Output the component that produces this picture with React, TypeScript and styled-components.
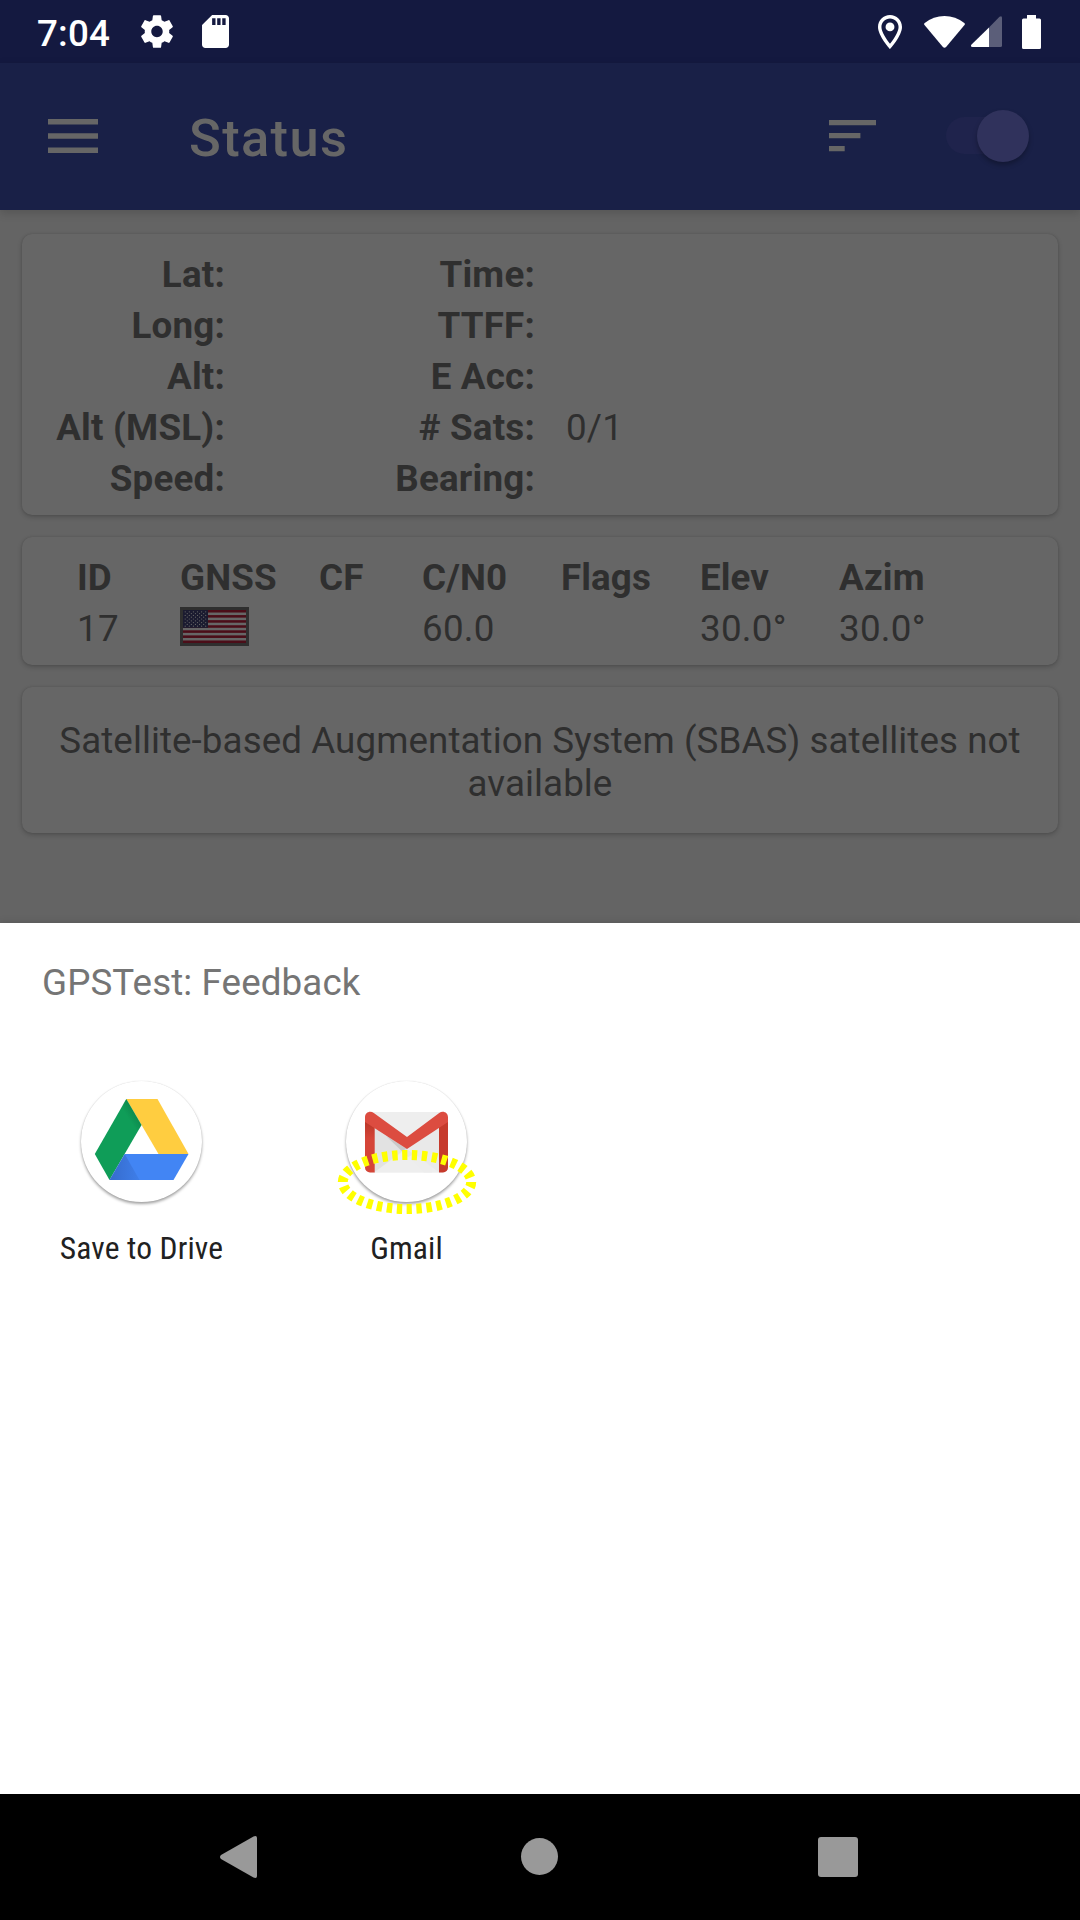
import React from "react";
import styled, { createGlobalStyle } from "styled-components";

const Global = createGlobalStyle`
  html, body { margin: 0; padding: 0; background: #000; }
  * { box-sizing: border-box; }
`;

const Screen = styled.div`
  width: 1080px;
  height: 1920px;
  display: flex;
  flex-direction: column;
  overflow: hidden;
  font-family: Roboto, "Noto Sans", sans-serif;
  font-size: 36.75px;
  line-height: 43px;
`;

const StatusBar = styled.header`
  height: 63px;
  flex: none;
  display: flex;
  align-items: center;
  justify-content: space-between;
  padding: 0 39px 0 37px;
  background: #141940;
  color: #fff;
`;

const Cluster = styled.div`
  display: flex;
  align-items: center;
`;

const Clock = styled.span`
  width: 103.5px;
  font-weight: 500;
  letter-spacing: 0.2px;
  padding-top: 3px;
`;

const Glyph = styled.svg<{ $gap?: number }>`
  display: block;
  flex: none;
  overflow: visible;
  margin-left: ${(p) => p.$gap ?? 0}px;
`;

const AppBar = styled.div`
  position: relative;
  z-index: 1;
  height: 147px;
  flex: none;
  display: flex;
  align-items: center;
  padding: 0 60px 2px 48px;
  background: #192047;
  box-shadow: 0 3px 9px rgba(0, 0, 0, 0.16);
`;

const Title = styled.h1`
  flex: 1;
  margin: 5px 0 0 91px;
  font-size: 52.5px;
  line-height: 62px;
  font-weight: 500;
  letter-spacing: 1.35px;
  color: #666;
`;

const Track = styled.div`
  width: 74px;
  height: 37px;
  margin-left: 70px;
  display: flex;
  align-items: center;
  justify-content: flex-end;
  border-radius: 19px;
  background: #1f234c;
`;

const Thumb = styled.div`
  flex: none;
  width: 52px;
  height: 52px;
  margin-right: -9px;
  border-radius: 50%;
  background: #30325c;
  box-shadow: 0 3px 5px rgba(0, 0, 0, 0.28);
`;

const Content = styled.main`
  height: 713px;
  flex: none;
  display: flex;
  flex-direction: column;
  gap: 22px;
  padding: 24px 22px 0;
  background: #646464;
  color: #2f2f2f;
`;

const Card = styled.section<{ $height: number; $pad: string }>`
  flex: none;
  height: ${(p) => p.$height}px;
  padding: ${(p) => p.$pad};
  border-radius: 10px;
  background: #666;
  box-shadow: 0 2px 5px rgba(0, 0, 0, 0.2), 0 0 2px rgba(0, 0, 0, 0.12);
`;

const Facts = styled.div`
  display: grid;
  grid-template-columns: 203px 310px 1fr;
  grid-auto-rows: 51px;
`;

const FactLabel = styled.span`
  font-weight: 700;
  letter-spacing: 0.2px;
  text-align: right;
  white-space: nowrap;
`;

const FactValue = styled.span`
  padding-left: 31px;
  letter-spacing: 0.2px;
`;

const SatTable = styled.div`
  display: grid;
  grid-template-columns: 103px 139px 103px 139px 139px 139px 1fr;
  grid-auto-rows: 51px;
`;

const Cell = styled.span<{ $head?: boolean }>`
  font-weight: ${(p) => (p.$head ? 700 : 400)};
  letter-spacing: ${(p) => (p.$head ? 0.1 : 0.25)}px;
  white-space: nowrap;
`;

const Notice = styled.p`
  margin: 0;
  text-align: center;
  letter-spacing: 0.08px;
`;

const Sheet = styled.section`
  height: 871px;
  flex: none;
  padding: 38px 0 0;
  background: #fff;
  box-shadow: 0 0 8px rgba(0, 0, 0, 0.15);
`;

const SheetTitle = styled.h2`
  margin: 0 0 76px 42px;
  font-size: 36.75px;
  font-weight: 400;
  letter-spacing: 0.1px;
  color: #757575;
`;

const Targets = styled.div`
  display: flex;
  padding-left: 9px;
`;

const Target = styled.div`
  position: relative;
  width: 265px;
  display: flex;
  flex-direction: column;
  align-items: center;
`;

const Disc = styled.div`
  width: 121px;
  height: 121px;
  margin-top: 1px;
  display: flex;
  align-items: center;
  justify-content: center;
  border-radius: 50%;
  background: #fff;
  box-shadow: 0 2px 3px rgba(0, 0, 0, 0.36), 0 0 1px rgba(0, 0, 0, 0.16);
`;

const Logo = styled.svg`
  flex: none;
`;

const TargetLabel = styled.span`
  margin-top: 28px;
  font-family: "Roboto Condensed", Roboto, sans-serif;
  font-stretch: 75%;
  font-size: 31.5px;
  line-height: 37px;
  letter-spacing: 0.15px;
  color: #212121;
  white-space: nowrap;
`;

const Highlight = styled.svg`
  position: absolute;
  left: 60px;
  top: 66px;
`;

const NavBar = styled.nav`
  height: 126px;
  flex: none;
  display: flex;
  align-items: center;
  padding: 0 0 1px 220px;
  background: #000;
`;

const Flag = () => (
  <Glyph width="69" height="39" viewBox="0 0 69 39">
    <rect width="69" height="39" fill="#2f2f2f" />
    <rect x="3" y="3" width="63" height="33" fill="#666" />
    {[0, 1, 2, 3, 4, 5, 6].map((i) => (
      <rect key={i} x="3" y={3 + i * 5.08} width="63" height="2.54" fill="#4b0d18" />
    ))}
    <rect x="3" y="3" width="25" height="17.8" fill="#1b1b30" />
    {[0, 1, 2, 3, 4, 5, 6, 7, 8].map((r) =>
      Array.from({ length: r % 2 ? 5 : 6 }, (_, c) => (
        <circle
          key={`${r}-${c}`}
          cx={5.2 + c * 4.1 + (r % 2 ? 2.05 : 0)}
          cy={4.8 + r * 1.8}
          r="0.6"
          fill="#666"
        />
      ))
    )}
  </Glyph>
);

const facts: [string, string, string][] = [
  ["Lat:", "Time:", ""],
  ["Long:", "TTFF:", ""],
  ["Alt:", "E Acc:", ""],
  ["Alt (MSL):", "# Sats:", "0/1"],
  ["Speed:", "Bearing:", ""],
];

const columns = ["ID", "GNSS", "CF", "C/N0", "Flags", "Elev", "Azim"];
const satellite: React.ReactNode[] = ["17", <Flag />, "", "60.0", "", "30.0°", "30.0°"];

const DriveLogo = () => (
  <Logo width="122" height="122" viewBox="0 0 122 122">
    <defs>
      <linearGradient id="gs" x1="55" y1="32" x2="47" y2="37" gradientUnits="userSpaceOnUse">
        <stop offset="0" stopColor="#0a6b3c" stopOpacity=".4" />
        <stop offset="1" stopColor="#0a6b3c" stopOpacity="0" />
      </linearGradient>
      <linearGradient id="bs" x1="30" y1="88" x2="58" y2="88" gradientUnits="userSpaceOnUse">
        <stop offset="0" stopColor="#2a54a8" stopOpacity=".5" />
        <stop offset="1" stopColor="#2a54a8" stopOpacity=".15" />
      </linearGradient>
    </defs>
    <path d="M45.3 18H76.500L107.500 73H77.500Z" fill="#ffcd40" />
    <path d="M45.3 18L60.500 44L28.500 99L13.800 73Z" fill="#0f9d58" />
    <path d="M45.3 18L60.500 44L57 50L39 28Z" fill="url(#gs)" />
    <path d="M43.700 73H107.500L92.500 99H28.500Z" fill="#4285f4" />
    <path d="M43.700 73L58.500 99H28.500Z" fill="url(#bs)" />
  </Logo>
);

const GmailLogo = () => (
  <Logo width="122" height="122" viewBox="0 0 122 122">
    <defs>
      <linearGradient id="fold" x1="40" y1="54" x2="62" y2="88" gradientUnits="userSpaceOnUse">
        <stop offset="0" stopColor="#c6c6c6" />
        <stop offset="1" stopColor="#e6e6e6" />
      </linearGradient>
      <linearGradient id="side" x1="0" y1="40" x2="0" y2="91" gradientUnits="userSpaceOnUse">
        <stop offset="0" stopColor="#b93628" />
        <stop offset=".35" stopColor="#d54538" />
      </linearGradient>
    </defs>
    <rect x="19" y="31" width="83" height="60.500" rx="5" fill="#eee" />
    <path d="M28 47V91.500L61 68Z" fill="#e2e2e2" />
    <path d="M40 54L61 68L76 78L86 86V91.500H78Z" fill="url(#fold)" opacity=".5" />
    <path d="M40 55L61 68L68 73L62 76Z" fill="#c4c4c4" opacity=".8" />
    <path d="M61 68L93 47V91.500Z" fill="#e9e9e9" />
    <path d="M28 91.500L58 69Q61 67 64 69L93 91.500Z" fill="#eee" opacity=".7" />
    <path d="M19 36V86.500A5 5 0 0 0 24 91.500H28.700V43Z" fill="url(#side)" />
    <path d="M102 36V86.500A5 5 0 0 1 97 91.500H93V43Z" fill="#c63a2c" />
    <path d="M19 36.500C19 31.500 24 29.300 27.800 32L61 56L93.200 32C97 29.300 102 31.500 102 36.500V41L61 68L19 41Z" fill="#dc4c40" />
  </Logo>
);

export default function App() {
  return (
    <>
      <Global />
      <Screen>
        <StatusBar>
          <Cluster>
            <Clock>7:04</Clock>
            <Glyph width="32" height="33" viewBox="2.200 2 19.600 20">
              <path
                fill="#fff"
                d="M19.43 12.98c.04-.32.07-.64.07-.98s-.03-.66-.07-.98l2.11-1.65c.19-.15.24-.42.12-.64l-2-3.46c-.12-.22-.39-.3-.61-.22l-2.49 1c-.52-.4-1.08-.73-1.69-.98l-.38-2.65C14.46 2.18 14.25 2 14 2h-4c-.25 0-.46.18-.49.42l-.38 2.65c-.61.25-1.17.59-1.69.98l-2.49-1c-.23-.09-.49 0-.61.22l-2 3.46c-.13.22-.07.49.12.64l2.11 1.65c-.04.32-.07.65-.07.98s.03.66.07.98l-2.11 1.65c-.19.15-.24.42-.12.64l2 3.46c.12.22.39.3.61.22l2.49-1c.52.4 1.08.73 1.69.98l.38 2.65c.03.24.24.42.49.42h4c.25 0 .46-.18.49-.42l.38-2.65c.61-.25 1.17-.59 1.69-.98l2.49 1c.23.09.49 0 .61-.22l2-3.46c.12-.22.07-.49-.12-.64l-2.11-1.65zM12 15.5c-1.93 0-3.5-1.57-3.5-3.5s1.57-3.5 3.5-3.5 3.500 1.57 3.500 3.500-1.570 3.500-3.500 3.500z"
              />
            </Glyph>
            <Glyph $gap={29} width="27" height="33" viewBox="4 2 16 20" preserveAspectRatio="none">
              <path fill="#fff" d="M18 2h-8L4.020 8 4 20c0 1.100.9 2 2 2h12c1.100 0 2-.9 2-2V4c0-1.100-.9-2-2-2zm-6 6h-2V4h2v4zm3 0h-2V4h2v4zm3 0h-2V4h2v4z" />
            </Glyph>
          </Cluster>
          <Cluster>
            <Glyph width="24" height="34" viewBox="5 2 14 20" preserveAspectRatio="none">
              <path fill="#fff" d="M12 2C8.130 2 5 5.130 5 9c0 5.250 7 13 7 13s7-7.750 7-13c0-3.870-3.130-7-7-7zM7 9c0-2.760 2.240-5 5-5s5 2.240 5 5c0 2.880-2.880 7.190-5 9.880C9.920 16.210 7 11.850 7 9z" />
              <circle cx="12" cy="9" r="2.600" fill="#fff" />
            </Glyph>
            <Glyph $gap={22} width="41" height="32" viewBox="0 0 41 32">
              <path fill="#fff" d="M.3 8.800Q-.3 7.800.7 7Q9.500 0 20.500 0T40.300 7Q41.300 7.800 40.700 8.800L22.300 30.800Q20.500 32.800 18.700 30.800Z" />
            </Glyph>
            <Glyph $gap={6} width="31" height="31" viewBox="0 0 31 31">
              <path fill="#5b5e79" d="M18 11.500L28.500.8Q31-.8 31 1.800V29.500Q31 31 29.500 31H18Z" />
              <path fill="#fff" d="M18 11.500V31H1.500Q-.8 31 .3 28.800Z" />
            </Glyph>
            <Glyph $gap={20} width="19" height="34" viewBox="0 0 19 34">
              <path fill="#fff" d="M5 0H14V3.500H17.500Q19 3.500 19 5V32.500Q19 34 17.500 34H1.500Q0 34 0 32.500V5Q0 3.500 1.500 3.500H5Z" />
            </Glyph>
          </Cluster>
        </StatusBar>

        <AppBar>
          <Glyph width="50" height="34" viewBox="0 0 50 34">
            <path fill="#666" d="M0 0H50V5.600H0ZM0 14.200H50V19.800H0ZM0 28.400H50V34H0Z" />
          </Glyph>
          <Title>Status</Title>
          <Glyph width="47" height="31" viewBox="0 0 47 31">
            <path fill="#666" d="M0 0H47V5.200H0ZM0 13H31.400V18.200H0ZM0 26H15.700V31.200H0Z" />
          </Glyph>
          <Track>
            <Thumb />
          </Track>
        </AppBar>

        <Content>
          <Card $height={281} $pad="19px 0 0 0">
            <Facts>
              {facts.map(([left, right, value]) => (
                <React.Fragment key={left}>
                  <FactLabel>{left}</FactLabel>
                  <FactLabel>{right}</FactLabel>
                  <FactValue>{value}</FactValue>
                </React.Fragment>
              ))}
            </Facts>
          </Card>
          <Card $height={128} $pad="19px 0 0 55px">
            <SatTable>
              {columns.map((c) => (
                <Cell key={c} $head>
                  {c}
                </Cell>
              ))}
              {satellite.map((v, i) => (
                <Cell key={i}>{v}</Cell>
              ))}
            </SatTable>
          </Card>
          <Card $height={146} $pad="32px 30px 0">
            <Notice>Satellite-based Augmentation System (SBAS) satellites not available</Notice>
          </Card>
        </Content>

        <Sheet>
          <SheetTitle>GPSTest: Feedback</SheetTitle>
          <Targets>
            <Target>
              <Disc>
                <DriveLogo />
              </Disc>
              <TargetLabel>Save to Drive</TargetLabel>
            </Target>
            <Target>
              <Disc>
                <GmailLogo />
              </Disc>
              <TargetLabel>Gmail</TargetLabel>
              <Highlight width="146" height="72" viewBox="0 0 146 72">
                <ellipse
                  cx="73"
                  cy="36"
                  rx="64.200"
                  ry="27"
                  fill="none"
                  stroke="#ff0"
                  strokeWidth="10"
                  pathLength="300"
                  strokeDasharray="5.400 4.600"
                />
              </Highlight>
            </Target>
          </Targets>
        </Sheet>

        <NavBar>
          <Glyph width="37" height="42" viewBox="0 0 37 42">
            <path fill="#999" d="M1 19L33.500.4Q37-1 37 2V40Q37 43 33.500 41.600L1 23Q-1 21 1 19Z" />
          </Glyph>
          <Glyph $gap={264} width="37" height="37" viewBox="0 0 37 37">
            <circle cx="18.500" cy="18.500" r="18.500" fill="#999" />
          </Glyph>
          <Glyph $gap={260} width="40" height="40" viewBox="0 0 40 40">
            <rect width="40" height="40" rx="3" fill="#999" />
          </Glyph>
        </NavBar>
      </Screen>
    </>
  );
}
